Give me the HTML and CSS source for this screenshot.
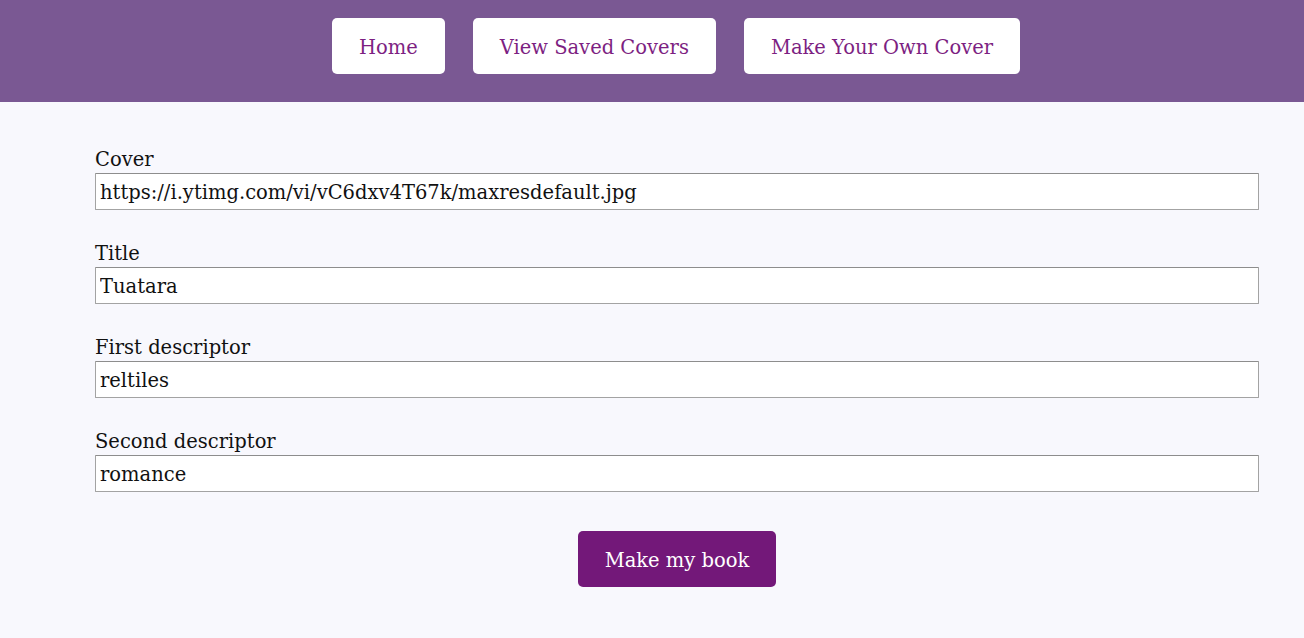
FILE: index.html
```html
<!DOCTYPE html>
<html>
<head>
<meta charset="utf-8">
<link rel="stylesheet" href="styles.css">
</head>
<body>
<header class="top">
  <nav class="nav">
    <button class="nav-btn">Home</button>
    <button class="nav-btn">View Saved Covers</button>
    <button class="nav-btn">Make Your Own Cover</button>
  </nav>
</header>
<main class="main">
  <form class="form">
    <div class="field">
      <label class="label">Cover</label>
      <input class="input" type="text" value="https://i.ytimg.com/vi/vC6dxv4T67k/maxresdefault.jpg">
    </div>
    <div class="field">
      <label class="label">Title</label>
      <input class="input" type="text" value="Tuatara">
    </div>
    <div class="field">
      <label class="label">First descriptor</label>
      <input class="input" type="text" value="reltiles">
    </div>
    <div class="field">
      <label class="label">Second descriptor</label>
      <input class="input" type="text" value="romance">
    </div>
    <div class="actions">
      <button class="make-btn" type="button">Make my book</button>
    </div>
  </form>
</main>
</body>
</html>
```

FILE: styles.css
```css
* { box-sizing: border-box; }
html, body { margin: 0; padding: 0; }
body {
  background: #f8f8fd;
  font-family: "DejaVu Serif", "Liberation Serif", serif;
  font-size: 19.5px;
  color: #111;
  height: 638px;
  overflow: hidden;
}
.top {
  background: #7a5893;
  height: 102px;
  padding-top: 18px;
}
.nav {
  display: flex;
  justify-content: center;
  gap: 28px;
  padding-left: 48px;
}
.nav-btn {
  font-family: inherit;
  font-size: 19.5px;
  color: #7d1f82;
  background: #fff;
  border: none;
  border-radius: 5px;
  height: 56px;
  padding: 3px 27px 0;
}
.main {
  padding: 46px 45px 0 95px;
}
.form {
  width: 1164px;
  display: flex;
  flex-direction: column;
  gap: 32px;
}
.field {
  display: flex;
  flex-direction: column;
}
.label {
  height: 25px;
  line-height: 24px;
  color: #111;
}
.input {
  height: 37px;
  width: 100%;
  font-family: inherit;
  font-size: 19.5px;
  color: #111;
  background: #fff;
  border: 1px solid #a3a3a3;
  border-top-color: #8d8d8d;
  border-radius: 1px;
  padding: 1px 4px 0;
  outline: none;
}
.actions {
  display: flex;
  justify-content: center;
  padding-top: 7px;
}
.make-btn {
  font-family: inherit;
  font-size: 19.5px;
  color: #fff;
  background: #731879;
  border: none;
  border-radius: 5px;
  height: 56px;
  width: 198px;
  padding-top: 4px;
}
```
